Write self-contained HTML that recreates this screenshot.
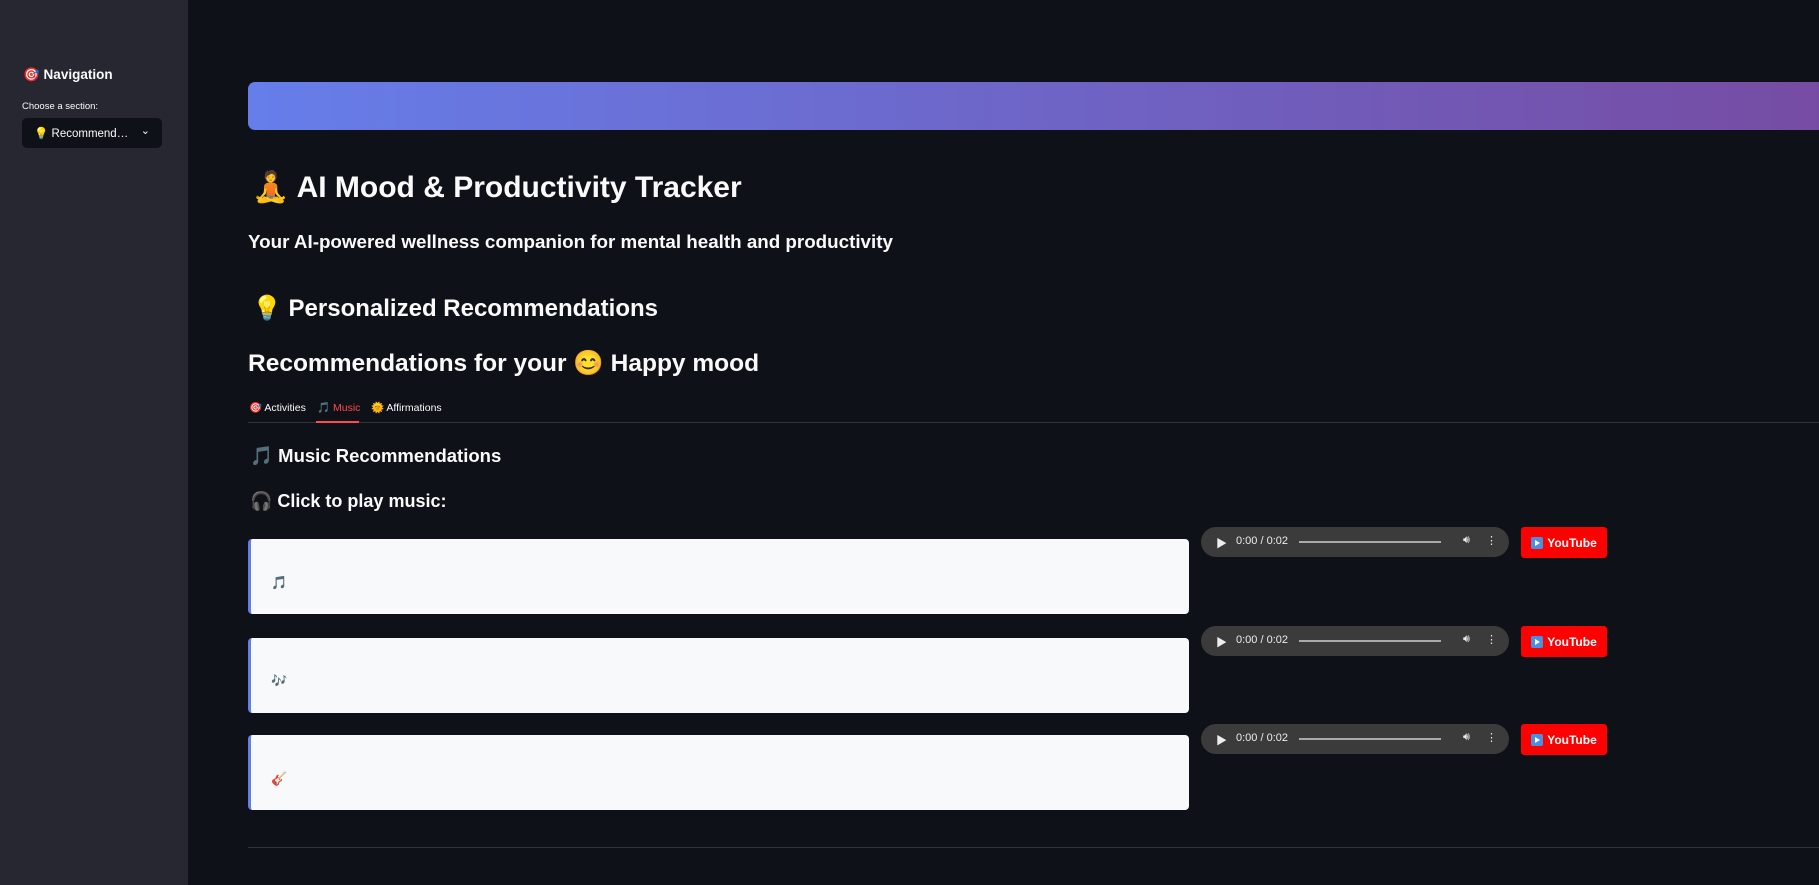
<!DOCTYPE html>
<html><head><meta charset="utf-8"><style>
*{margin:0;padding:0;box-sizing:border-box}
body{width:1819px;height:885px;overflow:hidden;background:#0e1117;font-family:"Liberation Sans","Noto Sans CJK JP",sans-serif;color:#fafafa;position:relative}
.sb{position:absolute;left:0;top:0;width:188px;height:885px;background:#262730}
.abs{position:absolute;white-space:nowrap}
.card{position:absolute;left:248px;width:941px;height:75px;background:#f8f9fa;border-left:3px solid #667eea;border-radius:4px}
.audio{position:absolute;left:1201px;width:308px;height:30px;background:#3b3b3b;border-radius:15px;font-size:11px;color:#eee}
.yt{position:absolute;left:1521px;width:86px;height:31px;background:#ff0000;border-radius:3px;font-size:12px;color:#fff;font-weight:bold;display:flex;align-items:center;justify-content:center;gap:4px}
.yt i{display:inline-block;width:12px;height:12px;background:#4a8fe0;border-radius:2px;position:relative}
.yt i:after{content:"";position:absolute;left:4px;top:3px;border-left:5px solid #fff;border-top:3px solid transparent;border-bottom:3px solid transparent}
</style></head><body>
<div class="sb">
<div class="abs" style="left:23px;top:67px;font-size:13.5px;font-weight:bold">🎯 Navigation</div>
<div class="abs" style="left:22px;top:101px;font-size:9.5px">Choose a section:</div>
<div class="abs" style="left:22px;top:118px;width:140px;height:30px;background:#0e1117;border-radius:5px;font-size:11.5px;padding:8px 0 0 12px">💡 Recommend…<span style="position:absolute;right:12px;top:6px;font-size:11px">⌄</span></div>
</div>
<div class="abs" style="left:248px;top:82px;width:1600px;height:48px;border-radius:7px;background:linear-gradient(90deg,#667eea,#764ba2)"></div>
<div class="abs" style="left:252px;top:170px;font-size:30px;font-weight:bold">🧘 AI Mood &amp; Productivity Tracker</div>
<div class="abs" style="left:248px;top:231px;font-size:18.8px;font-weight:bold">Your AI-powered wellness companion for mental health and productivity</div>
<div class="abs" style="left:252px;top:294px;font-size:24px;font-weight:bold">💡 Personalized Recommendations</div>
<div class="abs" style="left:248px;top:348px;font-size:24.5px;font-weight:bold">Recommendations for your 😊 Happy mood</div>
<div class="abs" style="left:249px;top:401px;font-size:10.5px">🎯 Activities</div>
<div class="abs" style="left:317px;top:401px;font-size:10.5px;color:#ff4b4b">🎵 Music</div>
<div class="abs" style="left:371px;top:401px;font-size:10.5px">🌞 Affirmations</div>
<div class="abs" style="left:248px;top:422px;width:1571px;height:1px;background:#333"></div>
<div class="abs" style="left:316px;top:421px;width:43px;height:2px;background:#ff4b4b"></div>
<div class="abs" style="left:250px;top:445px;font-size:18.5px;font-weight:bold">🎵 Music Recommendations</div>
<div class="abs" style="left:250px;top:491px;font-size:18px;font-weight:bold">🎧 Click to play music:</div>

<div class="card" style="top:539px"><span class="abs" style="left:20px;top:36px;font-size:13px">🎵</span></div>
<div class="card" style="top:638px"><span class="abs" style="left:20px;top:35px;font-size:13px">🎶</span></div>
<div class="card" style="top:735px"><span class="abs" style="left:20px;top:36px;font-size:13px">🎸</span></div>

<div class="audio" style="top:527px"><span class="abs" style="left:15px;top:8px">▶</span><span class="abs" style="left:35px;top:8px">0:00 / 0:02</span><span class="abs" style="left:98px;top:14px;width:142px;height:2px;background:#aaa"></span><span class="abs" style="left:262px;top:7px">🔊︎</span><span class="abs" style="left:285px;top:7px">⋮</span></div>
<div class="yt" style="top:527px"><i></i>YouTube</div>
<div class="audio" style="top:626px"><span class="abs" style="left:15px;top:8px">▶</span><span class="abs" style="left:35px;top:8px">0:00 / 0:02</span><span class="abs" style="left:98px;top:14px;width:142px;height:2px;background:#aaa"></span><span class="abs" style="left:262px;top:7px">🔊︎</span><span class="abs" style="left:285px;top:7px">⋮</span></div>
<div class="yt" style="top:626px"><i></i>YouTube</div>
<div class="audio" style="top:724px"><span class="abs" style="left:15px;top:8px">▶</span><span class="abs" style="left:35px;top:8px">0:00 / 0:02</span><span class="abs" style="left:98px;top:14px;width:142px;height:2px;background:#aaa"></span><span class="abs" style="left:262px;top:7px">🔊︎</span><span class="abs" style="left:285px;top:7px">⋮</span></div>
<div class="yt" style="top:724px"><i></i>YouTube</div>

<div class="abs" style="left:248px;top:847px;width:1571px;height:1px;background:#333"></div>
</body></html>
